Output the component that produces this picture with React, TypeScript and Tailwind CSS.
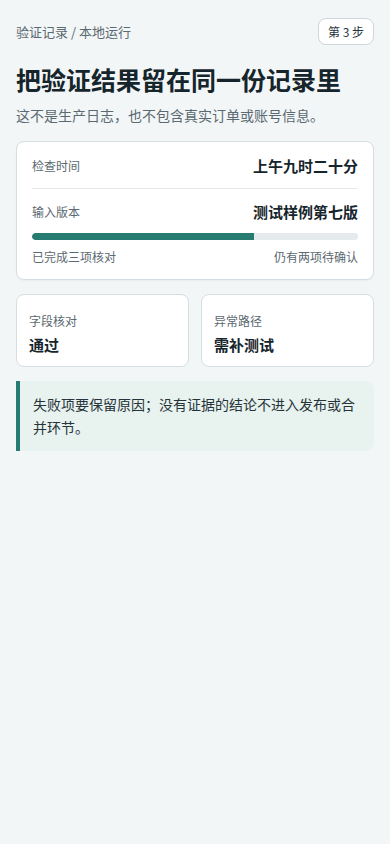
export default function App() {
  return (
    <main
      className="min-h-screen bg-[#f2f6f7] text-[#16252b] px-4 pt-[18px]"
      style={{ fontFamily: '"Noto Sans CJK SC", "Noto Sans", sans-serif' }}
    >
      <div className="flex items-center justify-between">
        <p className="text-[13px] text-[#5b6970]">验证记录 / 本地运行</p>
        <span className="h-[27px] px-[9px] flex items-center rounded-lg border border-[#cdd7db] bg-white text-[12px] text-[#26343a]">
          第 3 步
        </span>
      </div>

      <h1 className="mt-[18px] text-[25px] leading-[32px] font-bold">把验证结果留在同一份记录里</h1>
      <p className="mt-[9px] text-[14px] leading-[22px] text-[#5b6970]">这不是生产日志，也不包含真实订单或账号信息。</p>

      <section className="mt-[15px] rounded-lg border border-[#d5dee2] bg-white px-[15px] pt-[12px] pb-[13px] shadow-[0_1px_2px_rgba(0,0,0,0.04)]">
        <div className="flex items-center justify-between h-[24px]">
          <span className="text-[12px] text-[#5b6970]">检查时间</span>
          <span className="text-[15px] font-bold">上午九时二十分</span>
        </div>
        <div className="mt-[10px] border-t border-[#e3e9ec]" />
        <div className="mt-[11px] flex items-center justify-between h-[24px]">
          <span className="text-[12px] text-[#5b6970]">输入版本</span>
          <span className="text-[15px] font-bold">测试样例第七版</span>
        </div>
        <div className="mt-[9px] h-[7px] rounded-full bg-[#e5eaed] overflow-hidden">
          <div className="h-full rounded-l-full bg-[#277c72]" style={{ width: "68%" }} />
        </div>
        <div className="mt-[8px] flex justify-between text-[12px] leading-[18px] text-[#5b6970]">
          <span>已完成三项核对</span>
          <span>仍有两项待确认</span>
        </div>
      </section>

      <div className="mt-[14px] grid grid-cols-2 gap-3">
        <div className="h-[73px] rounded-lg border border-[#d5dee2] bg-white px-3 pt-[17px]">
          <p className="text-[12px] leading-[18px] text-[#5b6970]">字段核对</p>
          <p className="mt-[5px] text-[15px] leading-[20px] font-bold">通过</p>
        </div>
        <div className="h-[73px] rounded-lg border border-[#d5dee2] bg-white px-3 pt-[17px]">
          <p className="text-[12px] leading-[18px] text-[#5b6970]">异常路径</p>
          <p className="mt-[5px] text-[15px] leading-[20px] font-bold">需补测试</p>
        </div>
      </div>

      <div className="mt-[14px] rounded-r-lg border-l-4 border-[#277c72] bg-[#e8f2ef] pl-[13px] pr-4 py-[12px] text-[14px] leading-[23px] text-[#26343a]">
        失败项要保留原因；没有证据的结论不进入发布或合并环节。
      </div>
    </main>
  );
}
